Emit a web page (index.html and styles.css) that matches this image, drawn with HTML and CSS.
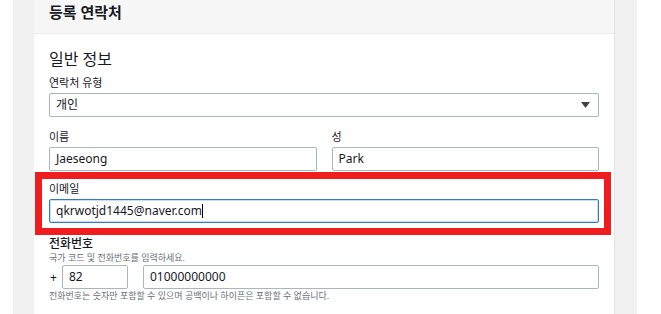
FILE: index.html
```html
<!DOCTYPE html>
<html lang="ko">
<head>
    <meta charset="UTF-8">
    <meta name="viewport" content="width=device-width, initial-scale=1.0">
    <title>등록 연락처</title>
    <link rel="stylesheet" href="styles.css">
</head>
<body>
    <div class="page">
        <div class="panel">
            <div class="panel-head">
                <h2>등록 연락처</h2>
            </div>
            <div class="panel-body">
                <h3>일반 정보</h3>

                <div class="field">
                    <label>연락처 유형</label>
                    <div class="box select">
                        <span>개인</span>
                        <svg class="arrow" width="9" height="6" viewBox="0 0 9 6"><path d="M0 0h9L4.5 6z" fill="#444"/></svg>
                    </div>
                </div>

                <div class="row">
                    <div class="field">
                        <label>이름</label>
                        <div class="box">Jaeseong</div>
                    </div>
                    <div class="field">
                        <label>성</label>
                        <div class="box">Park</div>
                    </div>
                </div>

                <div class="field email">
                    <label>이메일</label>
                    <div class="box focus">qkrwotjd1445@naver.com<span class="caret"></span></div>
                </div>

                <div class="field phone">
                    <label class="strong">전화번호</label>
                    <p class="desc">국가 코드 및 전화번호를 입력하세요.</p>
                    <div class="phone-row">
                        <span class="plus">+</span>
                        <div class="box code">82</div>
                        <div class="box number">01000000000</div>
                    </div>
                    <p class="desc">전화번호는 숫자만 포함할 수 있으며 공백이나 하이픈은 포함할 수 없습니다.</p>
                </div>
            </div>
        </div>
    </div>
</body>
</html>
```

FILE: styles.css
```css
html, body {
    margin: 0;
    height: 100%;
    overflow: hidden;
}

body {
    background: #fff;
    font-family: "Noto Sans", "Noto Sans CJK KR", sans-serif;
    color: #16191f;
}

.page {
    margin-left: 13px;
    width: 603px;
    height: 100%;
    background: #f1f1f1;
    padding-left: 21px;
}

.panel {
    width: 580px;
    height: 100%;
    background: #fff;
    border-right: 1px solid #e1e4e4;
}

.panel-head {
    height: 33px;
    background: #f7f7f7;
    border-bottom: 1px solid #eaeded;
    padding-left: 15px;
}

.panel-head h2 {
    margin: 0;
    font-size: 15px;
    font-weight: 700;
    line-height: 24px;
    color: #16191f;
}

.panel-body {
    padding: 15px 15px 0 15px;
}

h3 {
    margin: 0 0 6px 0;
    font-size: 16px;
    font-weight: 400;
    line-height: 20px;
}

label {
    display: block;
    font-size: 11px;
    line-height: 16px;
    margin-bottom: 2px;
}

.strong {
    font-weight: 500;
    font-size: 12px;
    line-height: 15px;
    margin-bottom: 0;
}

.box {
    box-sizing: border-box;
    height: 24px;
    border: 1px solid #aab7b8;
    border-radius: 2px;
    padding: 0 6px;
    font-size: 12px;
    line-height: 22px;
    background: #fff;
}

.select {
    display: flex;
    justify-content: space-between;
    align-items: center;
    padding-right: 8px;
}

.row {
    display: flex;
    gap: 15px;
    margin-top: 12px;
}

.row .field {
    flex: 1;
}

.email {
    position: relative;
    margin-top: 10px;
}

.email::after {
    content: "";
    position: absolute;
    left: -14px;
    right: -12px;
    top: -9px;
    bottom: -12px;
    border: 7px solid #ef1d1d;
}

.focus {
    border-color: #2f7dc0;
    box-shadow: inset 0 0 0 1px rgba(47, 125, 192, 0.25);
}

.caret {
    display: inline-block;
    width: 1px;
    height: 14px;
    background: #000;
    vertical-align: -3px;
}

.phone {
    margin-top: 13px;
}

.desc {
    margin: 0;
    font-size: 9px;
    line-height: 14px;
    color: #687078;
}

.phone-row {
    display: flex;
    align-items: center;
}

.plus {
    box-sizing: border-box;
    width: 13px;
    padding-left: 1px;
    font-size: 12px;
}

.code {
    width: 66px;
    margin-right: 15px;
}

.number {
    flex: 1;
}
```
